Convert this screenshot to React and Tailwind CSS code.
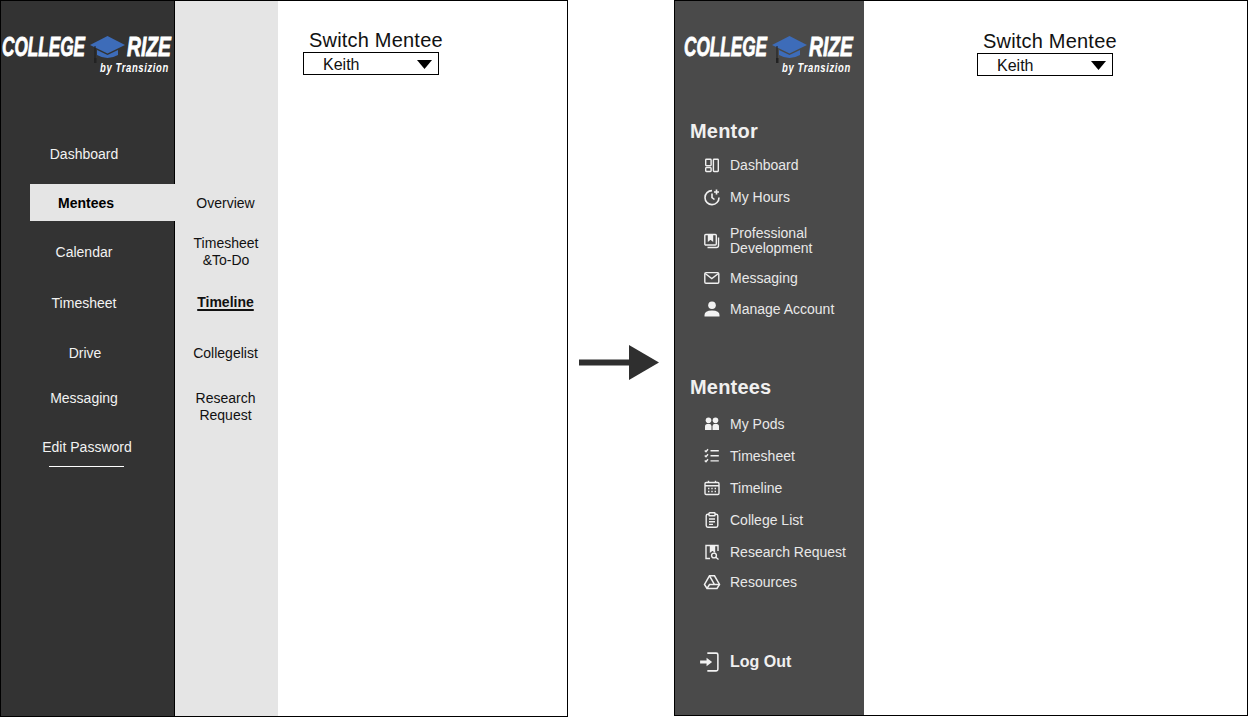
import { Fragment } from 'react';

const FONT = { fontFamily: '"Liberation Sans", Arial, sans-serif' };

function Logo({ className }) {
    return (
        <svg className={className} width="172" height="50" viewBox="0 0 172 50">
            <g fontFamily='"Liberation Sans", Arial, sans-serif' fontWeight="700" fontStyle="italic" fill="#fff" stroke="#fff" strokeWidth="0.8">
                <text transform="translate(1 26) scale(0.636 1)" fontSize="27">COLLEGE</text>
                <text transform="translate(126 26) scale(0.715 1)" fontSize="27">RIZE</text>
            </g>
            <text transform="translate(99 42) scale(0.787 1)" fontFamily='"Liberation Sans", Arial, sans-serif' fontWeight="700" fontStyle="italic" fontSize="12" letterSpacing="0.8" fill="#fff">by Transizion</text>
            {/* grad cap */}
            <path d="M89 15 L106.5 6 L124 15 L106.5 23.5 Z" fill="#3d6cb9" />
            <path d="M96 20 L106.5 25 L117 20 L117 25 Q106.5 31 96 25 Z" fill="#3d6cb9" />
            <path d="M94 16 L94 29" stroke="#1f1f1f" strokeWidth="1" />
            <rect x="93" y="28" width="2.5" height="5" fill="#222" />
        </svg>
    );
}

function SwitchMentee({ className }) {
    return (
        <div className={className}>
            <div className="ml-[6px] text-[20px] leading-[24px] tracking-[0.2px] text-[#111]">Switch Mentee</div>
            <div className="w-[136px] h-[23px] border border-black flex items-center justify-between pt-[2px] pl-[19px] pr-[6px] text-[16px] text-[#111]">
                <span>Keith</span>
                <svg width="15" height="9" viewBox="0 0 15 9"><path d="M0 0 H15 L7.5 9 Z" fill="#000" /></svg>
            </div>
        </div>
    );
}

function OldSidebar() {
    return (
        <div className="w-[173px] shrink-0 bg-[#333333] border-r border-black box-content flex flex-col text-[14px] leading-[20px] text-[#f2f2f2]">
            <Logo className="mt-[29px]" />
            <div className="mt-[64px] w-[166px] text-center">Dashboard</div>
            <div className="mt-[20px] ml-[29px] w-[145px] shrink-0 h-[37px] relative bg-[#e5e5e5] flex items-center pl-[28px] font-bold text-black">
                <span>Mentees</span>
            </div>
            <div className="mt-[21px] w-[166px] text-center">Calendar</div>
            <div className="mt-[31px] w-[166px] text-center">Timesheet</div>
            <div className="mt-[30px] w-[168px] text-center">Drive</div>
            <div className="mt-[25px] w-[166px] text-center">Messaging</div>
            <div className="mt-[29px] w-[172px] text-center">Edit Password</div>
            <div className="mt-[9px] ml-[48px] w-[75px] h-px bg-white" />
        </div>
    );
}

function SubMenu() {
    return (
        <div className="w-[103px] shrink-0 bg-[#e5e5e5] flex flex-col items-center text-center text-[14px] leading-[17px] text-[#111] pr-[2px]">
            <div className="mt-[194px]">Overview</div>
            <div className="mt-[23px] ml-px">Timesheet<br />&amp;To-Do</div>
            <div className="mt-[25px] font-bold underline decoration-2 underline-offset-2">Timeline</div>
            <div className="mt-[34px]">Collegelist</div>
            <div className="mt-[28px]">Research<br />Request</div>
        </div>
    );
}

const stroke = { fill: 'none', stroke: '#f0f0f0', strokeWidth: 1.4 };

const icons = {
    dashboard: (
        <g {...stroke}>
            <rect x="2.7" y="3.2" width="5.4" height="6.6" rx="0.7" />
            <rect x="2.7" y="11.6" width="5.4" height="3.9" rx="0.7" />
            <rect x="10.4" y="3.2" width="4.9" height="12.3" rx="0.7" />
        </g>
    ),
    hours: (
        <g {...stroke} strokeWidth="1.6">
            <path d="M9 2.6 A7 7 0 1 0 16 9.5" />
            <path d="M9 5.5 V9.5 L11.5 11.5" />
            <path d="M13.5 1.5 V6.5 M11 4 H16" />
        </g>
    ),
    development: (
        <g {...stroke}>
            <rect x="1.8" y="2.5" width="11.5" height="10.5" rx="1" />
            <path d="M5.5 3 V8.5 L7.5 7 L9.5 8.5 V3" fill="#f0f0f0" />
            <path d="M15.5 5.5 V13.5 Q15.5 15.5 13.5 15.5 H4.5" />
        </g>
    ),
    mail: (
        <g {...stroke}>
            <rect x="1.8" y="3.6" width="14" height="10.6" rx="1.2" />
            <path d="M2.2 4.5 L8.8 9.5 L15.4 4.5" />
        </g>
    ),
    account: (
        <g fill="#f2f2f2">
            <circle cx="9" cy="5.2" r="3.8" />
            <path d="M1.5 16.5 V15 Q1.5 10.5 9 10.5 Q16.5 10.5 16.5 15 V16.5 Z" />
        </g>
    ),
    pods: (
        <g fill="#f2f2f2">
            <circle cx="5.5" cy="5.2" r="2.8" />
            <circle cx="12.5" cy="5.2" r="2.8" />
            <path d="M2 15 V11.5 Q2 8.8 5.5 8.8 Q8.3 8.8 8.5 11 V15 Z" />
            <path d="M16 15 V11.5 Q16 8.8 12.5 8.8 Q9.7 8.8 9.5 11 V15 Z" />
        </g>
    ),
    checklist: (
        <g {...stroke}>
            <path d="M1.8 3.5 L3 4.8 L5 2.3 M1.8 8.5 L3 9.8 L5 7.3 M1.8 13.5 L3 14.8 L5 12.3" />
            <path d="M7.5 3.7 H15.8 M7.5 8.8 H15.8 M7.5 13.9 H15.8" />
        </g>
    ),
    calendar: (
        <g {...stroke}>
            <rect x="2" y="3.5" width="14" height="12" rx="1.2" />
            <path d="M2 6.8 H16 M5.5 1.8 V4 M12.5 1.8 V4" />
            <path d="M5 9.5 H6.4 M8.3 9.5 H9.7 M11.6 9.5 H13 M5 12.5 H6.4 M8.3 12.5 H9.7 M11.6 12.5 H13" />
        </g>
    ),
    clipboard: (
        <g {...stroke}>
            <path d="M6 3.2 H4.8 Q3.2 3.2 3.2 4.8 V14.6 Q3.2 16.2 4.8 16.2 H13.2 Q14.8 16.2 14.8 14.6 V4.8 Q14.8 3.2 13.2 3.2 H12" />
            <rect x="6" y="1.8" width="6" height="3" rx="0.6" />
            <path d="M6 8 H12 M6 10.7 H12 M6 13.4 H10" />
        </g>
    ),
    research: (
        <g {...stroke}>
            <path d="M7 15.5 H3 V2.5 H15 V8" />
            <path d="M7.5 3 V8.5 L9.5 7 L11.5 8.5 V3" fill="#f0f0f0" />
            <circle cx="11" cy="12.5" r="2.4" />
            <path d="M12.8 14.3 L15.5 16.5" />
        </g>
    ),
    drive: (
        <g {...stroke} strokeWidth="1.5">
            <path d="M6.5 2.8 H11.5 L16.5 11.5 L14 15.5 H4 L1.5 11.5 Z" />
            <path d="M6.5 2.8 L11.5 11.5 H16.5 M11.5 11.5 H6.5 L4 15.5" />
        </g>
    ),
    logout: (
        <g>
            <path d="M7.5 1 H15.5 Q17 1 17 2.5 V15.5 Q17 17 15.5 17 H7.5" fill="none" stroke="#f2f2f2" strokeWidth="1.4" />
            <path d="M1 7.6 H6.8 V5.2 L11.8 9 L6.8 12.8 V10.4 H1 Z" fill="#f2f2f2" />
        </g>
    ),
};

function NavIcon({ name }) {
    return (
        <svg width="18" height="18" viewBox="0 0 18 18" className="shrink-0">
            {icons[name]}
        </svg>
    );
}

const mentorLinks = [
    { icon: 'dashboard', label: 'Dashboard', gap: 'mt-[10px]' },
    { icon: 'hours', label: 'My Hours', gap: 'mt-[12px]' },
    { icon: 'development', label: <Fragment>Professional<br />Development</Fragment>, gap: 'mt-[19px]' },
    { icon: 'mail', label: 'Messaging', gap: 'mt-[12px]' },
    { icon: 'account', label: 'Manage Account', gap: 'mt-[11px]' },
];

const menteeLinks = [
    { icon: 'pods', label: 'My Pods', gap: 'mt-[13px]' },
    { icon: 'checklist', label: 'Timesheet', gap: 'mt-[12px]' },
    { icon: 'calendar', label: 'Timeline', gap: 'mt-[12px]' },
    { icon: 'clipboard', label: 'College List', gap: 'mt-[12px]' },
    { icon: 'research', label: 'Research Request', gap: 'mt-[12px]' },
    { icon: 'drive', label: 'Resources', gap: 'mt-[10px]' },
];

function NavLink({ item }) {
    return (
        <div className={`${item.gap} min-h-5 flex items-center gap-[9px] pl-[28px]`}>
            <NavIcon name={item.icon} />
            <span>{item.label}</span>
        </div>
    );
}

function NewSidebar() {
    return (
        <div className="w-[189px] shrink-0 bg-[#4a4a4a] flex flex-col text-[14px] leading-[15px] text-[#e8e8e8]">
            <Logo className="mt-[29px] ml-[8px]" />
            <div className="mt-[37px] pl-[15px] text-[20px] leading-[28px] font-bold tracking-[0.2px] text-[#f0f0f0]">Mentor</div>
            {mentorLinks.map((item) => <NavLink key={item.icon} item={item} />)}
            <div className="mt-[54px] pl-[15px] text-[20px] leading-[28px] font-bold tracking-[0.2px] text-[#f0f0f0]">Mentees</div>
            {menteeLinks.map((item) => <NavLink key={item.icon} item={item} />)}
            <div className="mt-[60px] h-5 flex items-center gap-[11px] pl-[24px] text-[16px] font-bold text-[#f0f0f0]">
                <svg width="20" height="20" viewBox="0 0 18 18" className="shrink-0">{icons.logout}</svg>
                <span className="leading-[20px]">Log Out</span>
            </div>
        </div>
    );
}

export default function App() {
    return (
        <div className="w-[1248px] h-[717px] bg-white flex items-start overflow-hidden" style={FONT}>
            {/* current layout */}
            <div className="w-[568px] h-[717px] shrink-0 border border-black flex">
                <OldSidebar />
                <SubMenu />
                <SwitchMentee className="ml-[25px] mt-[27px]" />
            </div>

            <div className="w-[106px] h-[717px] shrink-0 flex items-center pl-[11px] pt-[7px]">
                <svg width="80" height="35" viewBox="0 0 80 35">
                    <rect x="0" y="14.5" width="51" height="6" fill="#2f2f2f" />
                    <path d="M50 0 L80 17.5 L50 35 Z" fill="#2f2f2f" />
                </svg>
            </div>

            {/* proposed layout */}
            <div className="w-[574px] h-[716px] shrink-0 border border-black flex">
                <NewSidebar />
                <SwitchMentee className="ml-[113px] mt-[28px]" />
            </div>
        </div>
    );
}
